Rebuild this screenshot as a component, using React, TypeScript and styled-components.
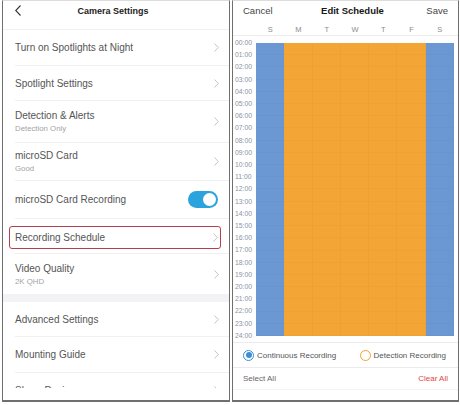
import React from "react";
import styled, { createGlobalStyle } from "styled-components";

const GlobalStyle = createGlobalStyle`
	html, body {
		margin: 0;
		padding: 0;
		background: #fff;
	}
	body {
		font-family: "Liberation Sans", Arial, sans-serif;
		-webkit-font-smoothing: antialiased;
	}
`;

const Page = styled.div`
	display: flex;
	gap: 2px;
	width: 460px;
	height: 405px;
	padding: 0 1px 0 2px;
	box-sizing: border-box;
`;

const Phone = styled.div<{ $w: number }>`
	width: ${(p) => p.$w}px;
	height: 402px;
	box-sizing: border-box;
	border: 1px solid #6f6f6f;
	border-top-color: #dcdcdc;
	border-bottom-width: 2px;
	background: #fff;
	display: flex;
	flex-direction: column;
	overflow: hidden;
`;

/* ---------- left: camera settings ---------- */

const NavBar = styled.div`
	height: 28px;
	flex: none;
	display: grid;
	grid-template-columns: 30px 1fr 30px;
	align-items: center;
	border-bottom: 1px solid #f1f1f1;
`;

const BackBtn = styled.span`
	padding-left: 12px;
	display: flex;
	align-items: center;
	margin-top: -9px;
`;

const NavTitle = styled.div`
	text-align: center;
	font-size: 9px;
	font-weight: 700;
	color: #1c1c1c;
	margin-top: -9px;
	margin-left: -6px;
`;

const ListClip = styled.div`
	flex: 1;
	overflow: hidden;
`;

const Row = styled.div<{ $h: number; $last?: boolean }>`
	height: ${(p) => p.$h}px;
	box-sizing: border-box;
	margin-left: 12px;
	padding-right: 10px;
	display: flex;
	align-items: center;
	justify-content: space-between;
	border-bottom: ${(p) => (p.$last ? "none" : "1px solid #f0f0f0")};
`;

const HighlightBox = styled.div`
	flex: 1;
	height: 23px;
	box-sizing: border-box;
	margin: 3px -2px 0 -6px;
	padding: 0 2px 0 5px;
	border: 1px solid #b43f4e;
	border-radius: 3px;
	display: flex;
	align-items: center;
	justify-content: space-between;
`;

const Texts = styled.div`
	display: flex;
	flex-direction: column;
	gap: 3px;
`;

const Label = styled.span`
	font-size: 10px;
	color: #555;
	line-height: 11px;
`;

const SubLabel = styled.span`
	font-size: 7.8px;
	color: #a3a3a3;
	line-height: 9px;
`;

const Band = styled.div`
	height: 8px;
	flex: none;
	background: #f3f3f5;
`;

const Toggle = styled.span`
	width: 30px;
	height: 17px;
	box-sizing: border-box;
	border-radius: 9px;
	background: #2ba3dc;
	display: flex;
	align-items: center;
	justify-content: flex-end;
	padding: 0 2px;
	margin-right: 1px;
`;

const Knob = styled.span`
	width: 13px;
	height: 13px;
	border-radius: 50%;
	background: #fff;
`;

const BottomPad = styled.div`
	height: 12px;
	flex: none;
	background: #fff;
`;

const Chevron = () => (
	<svg width="5" height="9" viewBox="0 0 5 9">
		<polyline points="0.5,0.5 4.3,4.5 0.5,8.5" fill="none" stroke="#bdbdbd" strokeWidth="0.9" />
	</svg>
);

const BackIcon = () => (
	<svg width="6" height="11" viewBox="0 0 6 11">
		<polyline points="5.5,0.5 0.7,5.5 5.5,10.5" fill="none" stroke="#333" strokeWidth="1.1" />
	</svg>
);

/* ---------- right: edit schedule ---------- */

const TopBar = styled.div`
	height: 19px;
	flex: none;
	display: flex;
	align-items: center;
	justify-content: space-between;
	padding: 0 10px;
`;

const TopBtn = styled.span`
	font-size: 9.5px;
	color: #444;
`;

const TopTitle = styled.span`
	font-size: 9.5px;
	font-weight: 700;
	color: #161616;
	margin-left: 6px;
`;

const DaysRow = styled.div`
	height: 16px;
	flex: none;
	box-sizing: border-box;
	display: grid;
	grid-template-columns: 23px repeat(7, 1fr) 4px;
	align-items: center;
	border-bottom: 1px solid #ececec;
	padding-top: 3px;
`;

const Day = styled.span`
	font-size: 7.5px;
	color: #8c8c8c;
	text-align: center;
`;

const ScheduleBody = styled.div`
	flex: none;
	display: flex;
	padding: 7px 4px 6px 0;
	border-bottom: 1px solid #ebebeb;
`;

const TimeCol = styled.div`
	width: 23px;
	margin: -4px 0;
	display: flex;
	flex-direction: column;
	justify-content: space-between;
	padding-left: 2px;
	box-sizing: border-box;
`;

const Time = styled.span`
	font-size: 6.8px;
	line-height: 8px;
	height: 8px;
	color: #8993a6;
`;

const Grid = styled.div`
	width: 198px;
	height: 293px;
	display: grid;
	grid-template-columns: repeat(7, 1fr);
	grid-template-rows: repeat(24, 1fr);
`;

const Cell = styled.div<{ $mode: "cont" | "det" }>`
	background: ${(p) => (p.$mode === "cont" ? "#6b98d2" : "#f3a536")};
	box-shadow: inset -1px -1px 0 rgba(120, 80, 20, 0.04);
`;

const Legend = styled.div`
	height: 24px;
	flex: none;
	display: flex;
	align-items: center;
	justify-content: space-between;
	padding: 0 12px 0 10px;
	border-bottom: 1px solid #ebebeb;
`;

const LegendItem = styled.span`
	display: flex;
	align-items: center;
	gap: 3px;
	font-size: 8px;
	color: #555;
`;

const Radio = styled.span<{ $color: string; $on?: boolean }>`
	width: 11px;
	height: 11px;
	box-sizing: border-box;
	border-radius: 50%;
	border: 1.3px solid ${(p) => p.$color};
	display: flex;
	align-items: center;
	justify-content: center;

	&::after {
		content: "";
		width: 6px;
		height: 6px;
		border-radius: 50%;
		background: ${(p) => (p.$on ? p.$color : "transparent")};
	}
`;

const Actions = styled.div`
	height: 21px;
	flex: none;
	display: flex;
	align-items: center;
	justify-content: space-between;
	padding: 0 10px;
	border-bottom: 1px solid #f4f4f4;
`;

const Action = styled.span<{ $danger?: boolean }>`
	font-size: 8px;
	color: ${(p) => (p.$danger ? "#e2453f" : "#666")};
`;

const DAYS = ["S", "M", "T", "W", "T", "F", "S"];
const HOURS = Array.from({ length: 25 }, (_, i) => `${String(i).padStart(2, "0")}:00`);

const rows = [
	{ label: "Turn on Spotlights at Night", h: 36 },
	{ label: "Spotlight Settings", h: 35 },
	{ label: "Detection & Alerts", sub: "Detection Only", h: 42 },
	{ label: "microSD Card", sub: "Good", h: 38 },
];

export default function App() {
	return (
		<>
			<GlobalStyle />
			<Page>
				<Phone $w={228}>
					<NavBar>
						<BackBtn>
							<BackIcon />
						</BackBtn>
						<NavTitle>Camera Settings</NavTitle>
						<span />
					</NavBar>
					<ListClip>
						{rows.map((r) => (
							<Row key={r.label} $h={r.h}>
								<Texts>
									<Label>{r.label}</Label>
									{r.sub && <SubLabel>{r.sub}</SubLabel>}
								</Texts>
								<Chevron />
							</Row>
						))}
						<Row $h={38}>
							<Label>microSD Card Recording</Label>
							<Toggle>
								<Knob />
							</Toggle>
						</Row>
						<Row $h={35}>
							<HighlightBox>
								<Label>Recording Schedule</Label>
								<Chevron />
							</HighlightBox>
						</Row>
						<Row $h={40} $last>
							<Texts>
								<Label>Video Quality</Label>
								<SubLabel>2K QHD</SubLabel>
							</Texts>
							<Chevron />
						</Row>
						<Band />
						<Row $h={35}>
							<Label>Advanced Settings</Label>
							<Chevron />
						</Row>
						<Row $h={36}>
							<Label>Mounting Guide</Label>
							<Chevron />
						</Row>
						<Row $h={36}>
							<Label>Share Device</Label>
							<Chevron />
						</Row>
					</ListClip>
					<BottomPad />
				</Phone>

				<Phone $w={227}>
					<TopBar>
						<TopBtn>Cancel</TopBtn>
						<TopTitle>Edit Schedule</TopTitle>
						<TopBtn>Save</TopBtn>
					</TopBar>
					<DaysRow>
						<span />
						{DAYS.map((d, i) => (
							<Day key={i}>{d}</Day>
						))}
						<span />
					</DaysRow>
					<ScheduleBody>
						<TimeCol>
							{HOURS.map((h) => (
								<Time key={h}>{h}</Time>
							))}
						</TimeCol>
						<Grid>
							{Array.from({ length: 24 * 7 }, (_, i) => {
								const col = i % 7;
								return <Cell key={i} $mode={col === 0 || col === 6 ? "cont" : "det"} />;
							})}
						</Grid>
					</ScheduleBody>
					<Legend>
						<LegendItem>
							<Radio $color="#3b8ed8" $on />
							Continuous Recording
						</LegendItem>
						<LegendItem>
							<Radio $color="#f0a132" />
							Detection Recording
						</LegendItem>
					</Legend>
					<Actions>
						<Action>Select All</Action>
						<Action $danger>Clear All</Action>
					</Actions>
				</Phone>
			</Page>
		</>
	);
}
